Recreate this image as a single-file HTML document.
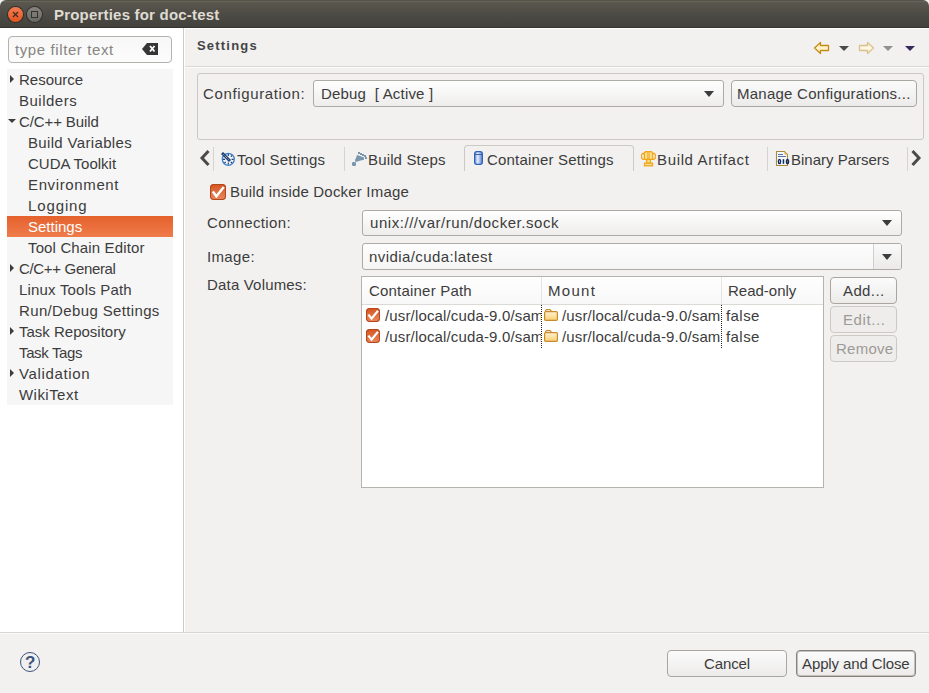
<!DOCTYPE html>
<html><head><meta charset="utf-8">
<style>
*{margin:0;padding:0;box-sizing:border-box}
html,body{width:929px;height:693px;overflow:hidden;background:#f2f1f0}
body{position:relative;font-family:"Liberation Sans",sans-serif;font-size:15px;color:#3c3c3c}
.a{position:absolute}
.t{position:absolute;white-space:nowrap;line-height:15px;font-size:15px}
#title{left:0;top:0;width:929px;height:28px;background:linear-gradient(#56534b 0,#56534b 1px,#67645a 1px,#67645a 2px,#5a574e 2px,#4d4b45 14px,#42413c 27px,#34332f 27px,#34332f 28px);border-radius:6px 6px 0 0}
#left{left:0;top:28px;width:183px;height:604px;background:#fff}
#sash{left:183px;top:28px;width:2px;height:604px;background:linear-gradient(90deg,#cfccc8 50%,#fff 50%)}
.btn{position:absolute;border:1px solid #a9a6a1;border-radius:4px;background:linear-gradient(#fbfbfb,#ecebea);}
.combo{position:absolute;border:1px solid #aeaba6;border-radius:3px;background:linear-gradient(#ffffff,#eeedec)}
.arr{position:absolute;width:0;height:0;border-left:5px solid transparent;border-right:5px solid transparent;border-top:6px solid #3c3c3c}
.tri-r{position:absolute;width:0;height:0;border-top:4px solid transparent;border-bottom:4px solid transparent;border-left:4px solid #3c3c3c}
.tri-d{position:absolute;width:0;height:0;border-left:4px solid transparent;border-right:4px solid transparent;border-top:4px solid #3c3c3c}
.sep{position:absolute;width:1px;background:#d6d3cf}
.cb{position:absolute;border-radius:4px;background:linear-gradient(#d4531f,#ea8a60);box-shadow:inset 0 0 0 1px #b3461b}
</style></head><body>

<!-- title bar -->
<div id="title" class="a"></div>
<div class="a" style="left:8px;top:7px;width:15px;height:15px;border-radius:50%;background:linear-gradient(#f47c52,#e4541f);box-shadow:0 0 0 1px #2f2e2a"></div>
<svg class="a" style="left:8px;top:7px" width="15" height="15"><path d="M5 5L10 10M10 5L5 10" stroke="#3a2a22" stroke-width="1.1"/></svg>
<div class="a" style="left:27px;top:7px;width:15px;height:15px;border-radius:50%;background:linear-gradient(#85837e,#6a6863);box-shadow:0 0 0 1px #2f2e2a"></div>
<div class="a" style="left:31px;top:11px;width:7px;height:7px;border:1.2px solid #33322e;background:#7a7873"></div>
<div class="t" style="left:54px;top:7px;color:#dfdbd2;font-weight:bold;font-size:15px;letter-spacing:0.2px">Properties for doc-test</div>

<!-- left panel -->
<div id="left" class="a"></div>
<div id="sash" class="a"></div>
<div class="a" style="left:8px;top:36px;width:164px;height:27px;border:1px solid #b5b2ad;border-radius:4px;background:linear-gradient(#f7f7f7,#fcfcfc)"></div>
<div class="t" style="left:15px;top:42px;color:#878581;letter-spacing:0.6px">type filter text</div>
<svg class="a" style="left:142px;top:43px" width="16" height="12"><path d="M5 0H16V12H5L0 6Z" fill="#363636"/><path d="M8 3L12.5 8.5M12.5 3L8 8.5" stroke="#fff" stroke-width="1.8"/></svg>

<div class="a" style="left:7px;top:69px;width:166px;height:336px;background:#f6f6f6"></div>
<div class="a" style="left:7px;top:216px;width:166px;height:21px;background:linear-gradient(#e4612c,#f07c4c)"></div>

<div class="tri-r" style="left:10px;top:75px"></div>
<div class="t" style="left:19px;top:72px">Resource</div>
<div class="t" style="left:19px;top:93px;letter-spacing:0.5px">Builders</div>
<div class="tri-d" style="left:8px;top:119px"></div>
<div class="t" style="left:19px;top:114px;letter-spacing:-0.11px">C/C++ Build</div>
<div class="t" style="left:28px;top:135px;letter-spacing:0.34px">Build Variables</div>
<div class="t" style="left:28px;top:156px">CUDA Toolkit</div>
<div class="t" style="left:28px;top:177px;letter-spacing:0.63px">Environment</div>
<div class="t" style="left:28px;top:198px;letter-spacing:0.88px">Logging</div>
<div class="t" style="left:28px;top:219px;color:#fff;letter-spacing:0.0px">Settings</div>
<div class="t" style="left:28px;top:240px;letter-spacing:0.14px">Tool Chain Editor</div>
<div class="tri-r" style="left:10px;top:264px"></div>
<div class="t" style="left:19px;top:261px;letter-spacing:-0.33px">C/C++ General</div>
<div class="t" style="left:19px;top:282px;letter-spacing:0.19px">Linux Tools Path</div>
<div class="t" style="left:19px;top:303px;letter-spacing:0.36px">Run/Debug Settings</div>
<div class="tri-r" style="left:10px;top:327px"></div>
<div class="t" style="left:19px;top:324px">Task Repository</div>
<div class="t" style="left:19px;top:345px;letter-spacing:-0.36px">Task Tags</div>
<div class="tri-r" style="left:10px;top:369px"></div>
<div class="t" style="left:19px;top:366px;letter-spacing:0.64px">Validation</div>
<div class="t" style="left:19px;top:387px;letter-spacing:0.46px">WikiText</div>

<!-- right header -->
<div class="a" style="left:185px;top:28px;width:744px;height:1px;background:#fff"></div>
<div class="t" style="left:197px;top:38px;font-weight:bold;font-size:13px;letter-spacing:1.2px;color:#454545">Settings</div>
<div class="a" style="left:185px;top:66px;width:744px;height:1px;background:#dcd9d5"></div>
<div class="a" style="left:185px;top:67px;width:744px;height:1px;background:#fbfbfa"></div>


<!-- nav arrows -->
<svg class="a" style="left:813px;top:41px" width="17" height="14"><path d="M1.5 7L7.5 1.5V4.5H15.5V9.5H7.5V12.5Z" fill="#fff3c4" stroke="#c48a1c" stroke-width="1.3" stroke-linejoin="round"/></svg>
<div class="arr" style="left:839px;top:46px;border-left-width:5px;border-right-width:5px;border-top:5px solid #4a4a4a"></div>
<svg class="a" style="left:858px;top:41px" width="17" height="14"><path d="M15.5 7L9.5 1.5V4.5H1.5V9.5H9.5V12.5Z" fill="#fdf6e0" stroke="#dcc08c" stroke-width="1.3" stroke-linejoin="round"/></svg>
<div class="arr" style="left:883px;top:46px;border-top:5px solid #909090"></div>
<div class="arr" style="left:905px;top:46px;border-top:5px solid #38285c"></div>

<!-- config group -->
<div class="a" style="left:197px;top:73px;width:727px;height:67px;border:1px solid #cbc8c3;border-radius:3px"></div>
<div class="t" style="left:203px;top:86px;letter-spacing:0.64px">Configuration:</div>
<div class="combo" style="left:313px;top:80px;width:411px;height:27px"></div>
<div class="t" style="left:321px;top:86px;letter-spacing:0.18px">Debug&nbsp; [ Active ]</div>
<div class="arr" style="left:704px;top:91px"></div>
<div class="btn" style="left:731px;top:80px;width:186px;height:27px"></div>
<div class="t" style="left:737px;top:86px;letter-spacing:0.25px">Manage Configurations...</div>

<!-- tabs -->
<svg class="a" style="left:199px;top:149px" width="13" height="18"><path d="M9.5 2L3 9L9.5 16" fill="none" stroke="#4a4a4a" stroke-width="3"/></svg>
<div class="sep" style="left:213px;top:147px;height:24px"></div>
<svg class="a" style="left:221px;top:152px" width="15" height="15">
 <circle cx="7.3" cy="7.3" r="6" fill="#eef3fa" stroke="#3d80c8" stroke-width="1.3"/>
 <path d="M7.3 2v2M7.3 10.6v2M2 7.3h2M10.6 7.3h2M3.5 3.5l1.2 1.2M11 11l-1.2-1.2M3.5 11l1.2-1.2M11 3.5l-1.2 1.2" stroke="#1f3c6c" stroke-width="1.2"/>
 <path d="M1 1L9 9" stroke="#1d3d78" stroke-width="3"/><path d="M2.5 2.5L8 8" stroke="#f2e7a0" stroke-width="1" stroke-dasharray="1 1"/>
</svg>
<div class="t" style="left:237px;top:152px;letter-spacing:0.17px">Tool Settings</div>
<div class="sep" style="left:344px;top:147px;height:24px"></div>
<svg class="a" style="left:348px;top:148px" width="22" height="22">
 <g fill="#7896ad"><rect x="10" y="4" width="2" height="2"/><rect x="12" y="5" width="2" height="2"/><rect x="14" y="6" width="2" height="2"/><rect x="16" y="7" width="2" height="2"/><rect x="17" y="9" width="2" height="2"/>
 <path d="M9 7L12 8L16 9.5V11.8L12.5 12.5L9.5 13.5L7.5 14L7 12L8 10Z"/><rect x="4" y="14" width="4" height="4" rx="1.2"/></g>
</svg>
<div class="t" style="left:368px;top:152px;letter-spacing:0.15px">Build Steps</div>

<div class="a" style="left:464px;top:145px;width:170px;height:26px;border:1px solid #cdcac5;border-bottom:none;border-radius:4px 4px 0 0;background:#f2f1f0"></div>
<svg class="a" style="left:474px;top:151px" width="9" height="14">
 <defs><linearGradient id="cyl" x1="0" x2="1"><stop offset="0" stop-color="#6f90d6"/><stop offset="0.4" stop-color="#e2ecfc"/><stop offset="1" stop-color="#587ccc"/></linearGradient></defs>
 <rect x="0.6" y="0.6" width="7.8" height="12.8" rx="2.3" fill="url(#cyl)" stroke="#2f60b8" stroke-width="1.2"/>
 <path d="M1 3.5h7" stroke="#3a62ae" stroke-width="1"/>
</svg>
<div class="t" style="left:487px;top:152px;letter-spacing:0.18px">Container Settings</div>

<svg class="a" style="left:638px;top:148px" width="22" height="22">
 <g stroke="#f0a71f" stroke-width="1.3" fill="#fbe08c">
 <path d="M7.5 3.6H13.5L14.6 5V11.4H6.4V5Z"/>
 <path d="M6.4 5.5H4.6L3.6 7V10L5 11.4H6.4M14.6 5.5H16.4L17.4 7V10L16 11.4H14.6" fill="none"/>
 <rect x="8.6" y="11.4" width="3.8" height="3.8"/>
 <rect x="6.5" y="15.2" width="8" height="2.6"/>
 <path d="M9.8 4V11M11.2 4V11" stroke-width="0.9"/>
 </g>
</svg>
<div class="t" style="left:657px;top:152px;letter-spacing:0.65px">Build Artifact</div>
<div class="sep" style="left:767px;top:147px;height:24px"></div>
<svg class="a" style="left:772px;top:148px" width="22" height="22">
 <path d="M4.5 3.5H12.5L15.5 6.5V17.5H4.5Z" fill="#f4f6fc" stroke="#a88a3a" stroke-width="1.1"/>
 <path d="M12.5 3.5V6.5H15.5Z" fill="#d8b455"/>
 <path d="M6 6.5H11M6 8.5H14" stroke="#5572aa" stroke-width="1"/>
 <g stroke="#0d2a62" stroke-width="1.4" fill="none"><ellipse cx="7.5" cy="13.5" rx="1.1" ry="2"/><ellipse cx="15.5" cy="13.5" rx="1.1" ry="2"/></g>
 <rect x="10.7" y="11.2" width="1.5" height="4.6" fill="#0d2a62"/>
</svg>
<div class="t" style="left:791px;top:152px">Binary Parsers</div>
<div class="sep" style="left:907px;top:147px;height:24px"></div>
<svg class="a" style="left:909px;top:149px" width="14" height="18"><path d="M3.5 2L10 9L3.5 16" fill="none" stroke="#4a4a4a" stroke-width="3"/></svg>

<!-- form -->
<div class="cb" style="left:210px;top:184px;width:16px;height:16px"></div>
<svg class="a" style="left:210px;top:184px" width="16" height="16"><path d="M2.8 7.6L6.4 12.2L13.8 3" fill="none" stroke="#fff" stroke-width="2.5"/></svg>
<div class="t" style="left:230px;top:184px;letter-spacing:0.19px">Build inside Docker Image</div>
<div class="t" style="left:207px;top:215px;letter-spacing:0.35px">Connection:</div>
<div class="combo" style="left:362px;top:210px;width:540px;height:26px"></div>
<div class="t" style="left:370px;top:215px;letter-spacing:0.55px">unix:///var/run/docker.sock</div>
<div class="arr" style="left:882px;top:220px"></div>
<div class="t" style="left:207px;top:249px;letter-spacing:0.34px">Image:</div>
<div class="combo" style="left:362px;top:243px;width:540px;height:27px;background:linear-gradient(#fdfdfd,#f5f5f5)"></div>
<div class="a" style="left:873px;top:244px;width:28px;height:25px;border-left:1px solid #d2cfca;background:linear-gradient(#f9f9f9,#ebeae9);border-radius:0 2px 2px 0"></div>
<div class="t" style="left:369px;top:249px;letter-spacing:0.42px">nvidia/cuda:latest</div>
<div class="arr" style="left:882px;top:254px"></div>
<div class="t" style="left:207px;top:277px;letter-spacing:0.18px">Data Volumes:</div>

<!-- table -->
<div class="a" style="left:361px;top:276px;width:463px;height:212px;border:1px solid #b6b3ae;background:#fff"></div>
<div class="a" style="left:362px;top:277px;width:461px;height:28px;background:linear-gradient(#fefefe,#f8f8f8);border-bottom:1px solid #dddad6"></div>
<div class="a" style="left:541px;top:277px;width:1px;height:27px;background:#e6e4e1"></div>
<div class="a" style="left:721px;top:277px;width:1px;height:27px;background:#e6e4e1"></div>
<div class="t" style="left:369px;top:283px;letter-spacing:0.2px">Container Path</div>
<div class="t" style="left:548px;top:283px;letter-spacing:1.3px">Mount</div>
<div class="t" style="left:728px;top:283px">Read-only</div>

<div class="a" style="left:362px;top:305px;width:179px;height:42px;overflow:hidden">
 <div class="cb" style="left:4px;top:3px;width:14px;height:14px"></div>
 <svg class="a" style="left:4px;top:3px" width="14" height="14"><path d="M2.4 6.6L5.6 10.6L12 2.8" fill="none" stroke="#fff" stroke-width="2.2"/></svg>
 <div class="t" style="left:23px;top:3px;letter-spacing:0.15px">/usr/local/cuda-9.0/samples</div>
 <div class="cb" style="left:4px;top:24px;width:14px;height:14px"></div>
 <svg class="a" style="left:4px;top:24px" width="14" height="14"><path d="M2.4 6.6L5.6 10.6L12 2.8" fill="none" stroke="#fff" stroke-width="2.2"/></svg>
 <div class="t" style="left:23px;top:24px;letter-spacing:0.15px">/usr/local/cuda-9.0/samples</div>
</div>
<div class="a" style="left:541px;top:305px;width:1px;height:43px;background:repeating-linear-gradient(#222 0 1px,transparent 1px 2px)"></div>
<div class="a" style="left:721px;top:305px;width:1px;height:43px;background:repeating-linear-gradient(#222 0 1px,transparent 1px 2px)"></div>
<div class="a" style="left:542px;top:305px;width:179px;height:42px;overflow:hidden">
 <svg class="a" style="left:2px;top:4px" width="14" height="13"><defs><linearGradient id="fd" x1="0" y1="0" x2="0" y2="1"><stop offset="0" stop-color="#fff4d4"/><stop offset="1" stop-color="#f9cf72"/></linearGradient></defs><path d="M1.6 2.6V1.6L2.6 0.6H6L7 1.6V2.6" fill="none" stroke="#c88a2c" stroke-width="1.1"/><rect x="0.6" y="2.6" width="12.8" height="8.8" rx="1.2" fill="url(#fd)" stroke="#c88a2c" stroke-width="1.2"/></svg>
 <div class="t" style="left:20px;top:3px;letter-spacing:0.15px">/usr/local/cuda-9.0/samples</div>
 <svg class="a" style="left:2px;top:25px" width="14" height="13"><path d="M1.6 2.6V1.6L2.6 0.6H6L7 1.6V2.6" fill="none" stroke="#c88a2c" stroke-width="1.1"/><rect x="0.6" y="2.6" width="12.8" height="8.8" rx="1.2" fill="url(#fd)" stroke="#c88a2c" stroke-width="1.2"/></svg>
 <div class="t" style="left:20px;top:24px;letter-spacing:0.15px">/usr/local/cuda-9.0/samples</div>
</div>
<div class="t" style="left:726px;top:308px;letter-spacing:0.43px">false</div>
<div class="t" style="left:726px;top:329px;letter-spacing:0.43px">false</div>

<div class="btn" style="left:830px;top:277px;width:67px;height:27px"></div>
<div class="t" style="left:843px;top:283px;letter-spacing:0.38px">Add...</div>
<div class="btn" style="left:830px;top:306px;width:67px;height:27px;border-color:#cdcac6;background:#eeedec"></div>
<div class="t" style="left:843px;top:312px;color:#9d9a96;letter-spacing:0.6px">Edit...</div>
<div class="btn" style="left:830px;top:335px;width:67px;height:27px;border-color:#cdcac6;background:#eeedec"></div>
<div class="t" style="left:836px;top:341px;color:#9d9a96;letter-spacing:0.24px">Remove</div>

<!-- bottom bar -->
<div class="a" style="left:0;top:632px;width:929px;height:1px;background:#d9d6d2"></div>
<div class="a" style="left:0;top:633px;width:929px;height:1px;background:#f9f9f8"></div>

<!-- help -->
<div class="a" style="left:20px;top:652px;width:20px;height:20px;border-radius:50%;border:1.5px solid #3d5478;background:#f0f0f2"></div>
<div class="t" style="left:25px;top:655px;font-weight:bold;font-size:17px;color:#3d5478">?</div>

<div class="btn" style="left:667px;top:650px;width:120px;height:27px"></div>
<div class="t" style="left:704px;top:656px;letter-spacing:-0.12px">Cancel</div>
<div class="btn" style="left:796px;top:650px;width:120px;height:27px;border:1px solid #85827d;box-shadow:inset 0 0 0 1px #c4c1bc"></div>
<div class="t" style="left:802px;top:656px;letter-spacing:-0.11px">Apply and Close</div>

</body></html>
